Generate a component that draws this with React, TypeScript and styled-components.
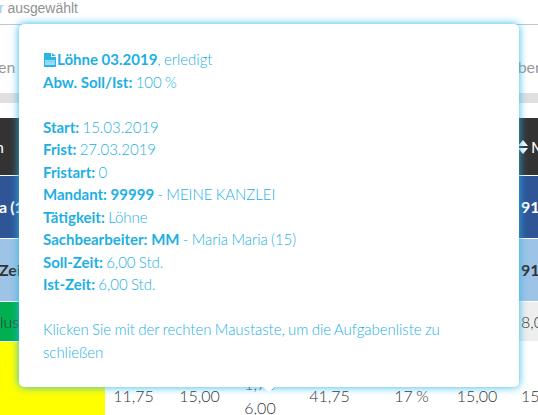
import React from 'react';
import styled, { createGlobalStyle } from 'styled-components';

const Global = createGlobalStyle`
  *{box-sizing:border-box}
  body{margin:0;background:#fff;overflow:hidden}
`;
const Page = styled.div`
  position:relative;width:538px;height:415px;overflow:hidden;
  font:300 16px/24px Lato,sans-serif;color:#333;
`;
const Status = styled.div`
  height:25px;border-bottom:1px solid #c6c6c6;margin-left:-1px;
  font:14px/16px "Liberation Sans",sans-serif;letter-spacing:-.05px;color:#929292;white-space:pre;
`;
const StatusLink = styled.span`color:#9dc8f0;`;
const Filter = styled.div`
  height:68px;padding-top:30px;display:flex;justify-content:space-between;
  font-weight:400;color:#999;word-spacing:-.8px;
`;
const FilterText = styled.span<{ $shift: number }>`margin:0 ${p => p.$shift}px 0 -2px;white-space:nowrap;`;
const Bar = styled.div`height:10px;margin-bottom:15px;background:#e0e0e0;`;
const Row = styled.div<{ $h: number; $bg?: string; $color?: string; $weight?: number; $top?: boolean }>`
  display:grid;grid-template-columns:105px 57px 75px 46px 93px 71px 60px 60px;
  grid-template-rows:100%;
  align-items:${p => (p.$top ? 'start' : 'center')};height:${p => p.$h}px;background:${p => p.$bg || '#fff'};
  color:${p => p.$color || '#333'};font-weight:${p => p.$weight || 300};
  margin-bottom:1px;white-space:nowrap;
`;
const Label = styled.div<{ $bg?: string; $shift?: number }>`
  height:100%;display:flex;align-items:center;background:${p => p.$bg || 'transparent'};
  text-indent:${p => p.$shift || 0}px;word-spacing:-.8px;
`;
const Value = styled.div`text-align:center;padding-top:42px;word-spacing:-1px;`;
const Stack = styled(Value)`padding-top:30px;`;
const Last = styled.div<{ $pad?: number; $top?: number }>`
  grid-column:8;display:flex;align-items:center;padding-left:${p => p.$pad ?? 14}px;padding-top:${p => p.$top ?? 0}px;
`;
const SortIcon = styled.svg`width:10px;height:14px;margin-right:3px;flex:none;`;
const Tip = styled.div`
  position:absolute;left:19px;top:24px;width:500px;height:363px;padding:24px;
  background:#fff;border-radius:5px;box-shadow:0 0 8px #29b6e6;
  font-size:15px;line-height:22.5px;color:#1eafe4;
`;
const Arrow = styled.svg`position:absolute;left:244px;top:363px;width:12px;height:5px;`;
const Line = styled.div`min-height:22.5px;word-spacing:-.7px;letter-spacing:-.03px;`;
const Bold = styled.b`font-weight:700;letter-spacing:0;word-spacing:0;`;
const FileIcon = styled.svg`width:12px;height:14px;margin:0 1px;vertical-align:-2px;`;

const details: [string, string][] = [
  ['Start:', ' 15.03.2019'], ['Frist:', ' 27.03.2019'], ['Fristart:', ' 0'],
  ['Mandant: 99999', ' - MEINE KANZLEI'], ['Tätigkeit:', ' Löhne'],
  ['Sachbearbeiter: MM', ' - Maria Maria (15)'], ['Soll-Zeit:', ' 6,00 Std.'], ['Ist-Zeit:', ' 6,00 Std.'],
];

export default function App() {
  return (
    <Page>
      <Global />
      <Status><StatusLink>r</StatusLink> ausgewählt</Status>
      <Filter><FilterText $shift={0}>en o</FilterText><FilterText $shift={-6}>ben</FilterText></Filter>
      <Bar />
      <Row $h={57} $bg="#333" $color="#fff" $weight={400}>
        <Label $shift={-5}>n</Label>
        <Last $pad={11}>
          <SortIcon viewBox="0 0 10 14"><path d="M0 6 5 0l5 6zM0 8h10l-5 6z" fill="#fff" /></SortIcon>M
        </Last>
      </Row>
      <Row $h={62} $bg="#2f5597" $color="#fff" $weight={700}><Label $shift={-1}>a (15)</Label><Last>91</Last></Row>
      <Row $h={62} $bg="#9dc3e6" $weight={700}><Label $shift={-1}>Zeit</Label><Last>91</Last></Row>
      <Row $h={39} $bg="#eee"><Label $bg="#00b050">lus</Label><Last>8,00</Last></Row>
      <Row $h={74} $top>
        <Label $bg="#ff0" />
        <Value>11,75</Value><Value>15,00</Value>
        <Stack>1,75<br />6,00</Stack>
        <Value>41,75</Value><Value>17 %</Value><Value>15,00</Value>
        <Last $top={42}>15,00</Last>
      </Row>
      <Tip>
        <Line>
          <FileIcon viewBox="0 0 12 14">
            <path d="M0 0h7v4h5v10H0z" fill="#29b6e6" /><path d="M8 0l4 3H8z" fill="#29b6e6" />
            <path d="M1 7h10v5H1z" fill="#9bdcf3" /><path d="M1 8.5h10v.6H1z" fill="#6bcbed" />
          </FileIcon>
          <Bold>Löhne 03.2019</Bold>, erledigt
        </Line>
        <Line><Bold>Abw. Soll/Ist:</Bold> 100 %</Line>
        <Line />
        {details.map(([name, value]) => <Line key={name}><Bold>{name}</Bold>{value}</Line>)}
        <Line />
        <Line>Klicken Sie mit der rechten Maustaste, um die Aufgabenliste zu schließen</Line>
        <Arrow viewBox="0 0 12 5"><path d="M0 0h12L6 5z" fill="#fff" /></Arrow>
      </Tip>
    </Page>
  );
}
